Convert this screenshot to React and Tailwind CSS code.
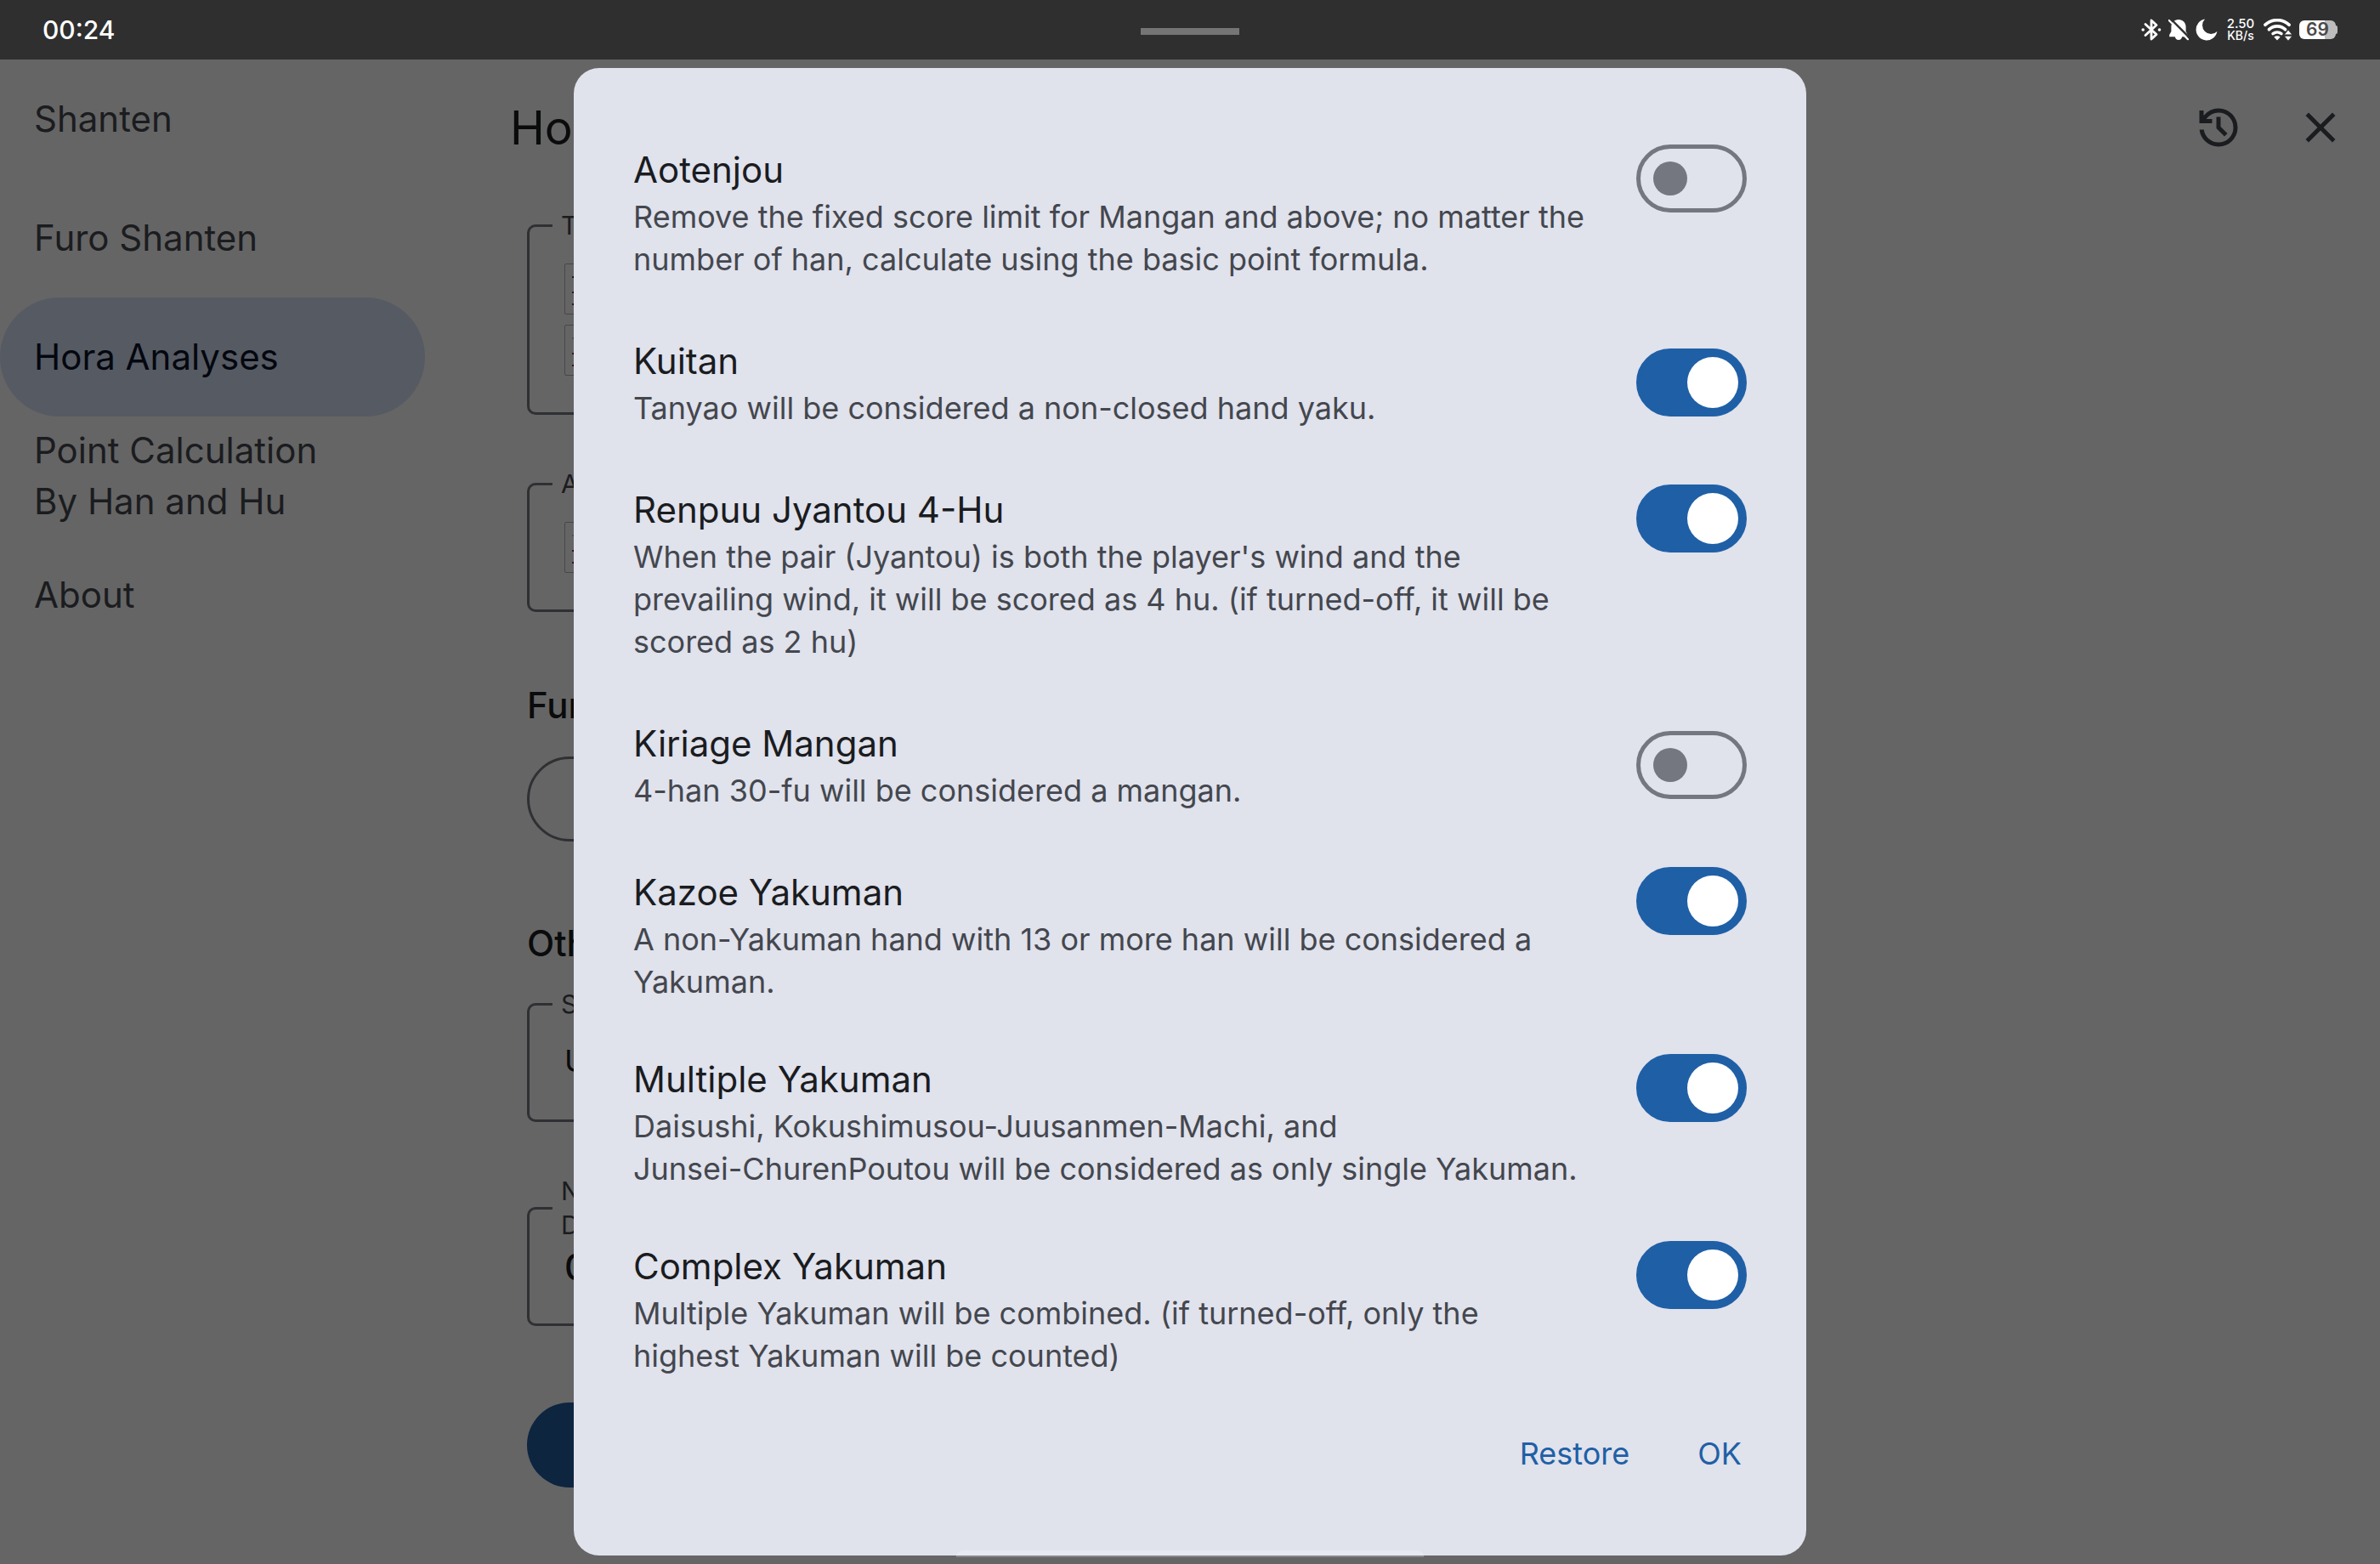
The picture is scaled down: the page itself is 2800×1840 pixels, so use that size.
import React, { useState } from "react";

const NAV = [
  { lines: ["Shanten"] },
  { lines: ["Furo Shanten"] },
  { lines: ["Hora Analyses"], active: true },
  { lines: ["Point Calculation", "By Han and Hu"] },
  { lines: ["About"] },
];

const OPTIONS = [
  {
    id: "aotenjou",
    title: "Aotenjou",
    lines: [
      "Remove the fixed score limit for Mangan and above; no matter the",
      "number of han, calculate using the basic point formula.",
    ],
    on: false,
  },
  {
    id: "kuitan",
    title: "Kuitan",
    lines: ["Tanyao will be considered a non-closed hand yaku."],
    on: true,
  },
  {
    id: "renpuu",
    title: "Renpuu Jyantou 4-Hu",
    lines: [
      "When the pair (Jyantou) is both the player's wind and the",
      "prevailing wind, it will be scored as 4 hu. (if turned-off, it will be",
      "scored as 2 hu)",
    ],
    on: true,
  },
  {
    id: "kiriage",
    title: "Kiriage Mangan",
    lines: ["4-han 30-fu will be considered a mangan."],
    on: false,
  },
  {
    id: "kazoe",
    title: "Kazoe Yakuman",
    lines: [
      "A non-Yakuman hand with 13 or more han will be considered a",
      "Yakuman.",
    ],
    on: true,
  },
  {
    id: "multiple",
    title: "Multiple Yakuman",
    lines: [
      "Daisushi, Kokushimusou-Juusanmen-Machi, and",
      "Junsei-ChurenPoutou will be considered as only single Yakuman.",
    ],
    on: true,
  },
  {
    id: "complex",
    title: "Complex Yakuman",
    lines: [
      "Multiple Yakuman will be combined. (if turned-off, only the",
      "highest Yakuman will be counted)",
    ],
    on: true,
  },
];

function BluetoothIcon() {
  return (
    <svg viewBox="0 0 24 26" className="h-[26px] w-6" fill="none" aria-hidden="true">
      <path d="M5 6.5 18 18.5 12 24V2l6 5.5L5 19.5" stroke="#fff" strokeWidth="2.8" strokeLinejoin="round" strokeLinecap="round" />
      <circle cx="2.2" cy="13" r="1.8" fill="#fff" />
      <circle cx="21.5" cy="13" r="1.8" fill="#fff" />
    </svg>
  );
}

function BellOffIcon() {
  return (
    <svg viewBox="0 0 24 26" className="h-[26px] w-6" aria-hidden="true">
      <path d="M12 1c-5 0-8.600 3.600-8.600 8.600v5.400L1.200 19v2.200h6.600c.4 2.200 2 3.800 4.200 3.800s3.800-1.600 4.200-3.800h6.600V19l-2.200-4V9.600C20.600 4.600 17 1 12 1z" fill="#fff" />
      <path d="M2.500 0 25 22.500" stroke="#2f2f2f" strokeWidth="2.400" />
      <path d="M.8 2 23 24.200" stroke="#fff" strokeWidth="2.200" strokeLinecap="round" />
    </svg>
  );
}

function MoonIcon() {
  return (
    <svg viewBox="0 0 26 26" className="size-[26px]" aria-hidden="true">
      <path d="M11 .6A12.500 12.500 0 1 0 25.400 15 9.800 9.800 0 0 1 11 .6z" fill="#fff" />
    </svg>
  );
}

function WifiIcon() {
  return (
    <svg viewBox="0 0 34 26" className="h-[26px] w-[34px]" fill="none" aria-hidden="true">
      <path d="M2 7.200C10-.2 22-.2 30 7.200" stroke="#fff" strokeWidth="3.800" strokeLinecap="round" />
      <path d="M6.500 12.700c5.500-5 13.500-5 19 0" stroke="#fff" strokeWidth="3.800" strokeLinecap="round" />
      <path d="M11 17.700c3-2.400 7-2.400 10 0" stroke="#fff" strokeWidth="3.400" strokeLinecap="round" />
      <path d="M12.300 21.500c2-1.600 5.400-1.600 7.400 0L16 25.600z" fill="#fff" />
      <path d="M24.400 18.800h9.200L29 13.200zM24.400 20.400h9.200L29 26z" fill="#fff" stroke="#2f2f2f" strokeWidth=".6" />
    </svg>
  );
}

function HistoryIcon() {
  return (
    <svg viewBox="0 0 24 24" className="size-[60px]" aria-hidden="true">
      <path
        d="M12 21q-3.450 0-6.012-2.287Q3.425 16.425 3.050 13H5.100q.35 2.600 2.313 4.300Q9.375 19 12 19q2.925 0 4.963-2.037Q19 14.925 19 12t-2.037-4.963Q14.925 5 12 5q-1.725 0-3.225.8T6.250 8H9v2H3V4h2v2.350q1.275-1.600 3.113-2.475Q9.950 3 12 3q1.875 0 3.513.712 1.637.713 2.850 1.926 1.212 1.212 1.925 2.850Q21 10.125 21 12t-.712 3.512q-.713 1.638-1.925 2.850-1.213 1.213-2.850 1.926Q13.875 21 12 21Zm2.800-4.800L11 12.400V7h2v4.600l3.200 3.200Z"
        fill="#1a1c1f"
      />
    </svg>
  );
}

function CloseIcon() {
  return (
    <svg viewBox="0 0 24 24" className="size-[60px]" aria-hidden="true">
      <path
        d="M19 6.410 17.590 5 12 10.590 6.410 5 5 6.410 10.590 12 5 17.590 6.410 19 12 13.410 17.590 19 19 17.590 13.410 12z"
        fill="#1a1c1f"
      />
    </svg>
  );
}

function StatusBar() {
  return (
    <header className="grid h-[70px] shrink-0 grid-cols-3 items-center bg-[#2f2f2f] px-[50px] text-white">
      <span className="text-[30px] leading-10 font-medium">00:24</span>
      <span className="mt-1 h-2 w-[116px] justify-self-center bg-[#757575]" />
      <div className="flex items-center gap-2 justify-self-end">
        <BluetoothIcon />
        <BellOffIcon />
        <MoonIcon />
        <div className="mx-1 flex w-[30px] flex-col items-center text-[15px] leading-[14px] font-medium">
          <span>2.50</span>
          <span className="text-[14px]">KB/s</span>
        </div>
        <WifiIcon />
        <div className="flex items-center">
          <span className="flex h-[22px] w-[43px] items-center justify-center rounded-md bg-linear-to-r from-white from-69% to-[#bdbdbd] to-69% text-[21px] leading-[22px] font-semibold text-[#4a4a4a]">
            69
          </span>
          <span className="h-2.5 w-0.5 rounded-r-sm bg-[#bdbdbd]" />
        </div>
      </div>
    </header>
  );
}

function Tile({ top = "bg-[#4c4c4c]" }) {
  return (
    <span className="flex h-[60px] w-[42px] flex-col rounded-xs border border-[#474747] px-2">
      <span className={"mt-3.5 h-0.5 w-6 rounded-full " + top} />
      <span className="mt-4 h-0.5 w-6 rounded-full bg-[#2a0508]" />
      <span className="mt-3 h-0.5 w-6 rounded-full bg-[#2a0508]" />
    </span>
  );
}

function Field({ label, className = "", children }) {
  return (
    <fieldset className={"rounded-[10px] border-3 border-[#2f3033] pr-10 pl-[27px] " + className}>
      <legend className="px-2.5 text-[30px] leading-10 text-[#1b1c1f]">{label}</legend>
      <div className="pl-3.5">{children}</div>
    </fieldset>
  );
}

function Switch({ id, checked, onChange }) {
  return (
    <span className="relative block h-20 w-[130px] shrink-0">
      <input
        id={id}
        type="checkbox"
        role="switch"
        checked={checked}
        onChange={onChange}
        className="peer block h-20 w-[130px] cursor-pointer appearance-none rounded-full border-5 border-[#74777f] checked:border-[#1f5fa6] checked:bg-[#1f5fa6]"
      />
      <span className="pointer-events-none absolute top-5 left-5 size-10 rounded-full bg-[#74777f] peer-checked:top-2.5 peer-checked:left-[60px] peer-checked:size-[60px] peer-checked:bg-white" />
    </span>
  );
}

function OptionRow({ option, checked, onChange }) {
  const single = option.lines.length === 1;
  return (
    <li className={single ? "flex min-h-[180px] items-center gap-10" : "flex items-start gap-10 py-[30px]"}>
      <label htmlFor={option.id} className="min-w-0 flex-1">
        <span className="block text-[42px] leading-[60px] text-[#1a1c1f]">{option.title}</span>
        {option.lines.map((line) => (
          <span key={line} className="block text-[36px] leading-[50px] whitespace-nowrap text-[#44474e]">
            {line}
          </span>
        ))}
      </label>
      <Switch id={option.id} checked={checked} onChange={onChange} />
    </li>
  );
}

export default function App() {
  const [state, setState] = useState(() => Object.fromEntries(OPTIONS.map((o) => [o.id, o.on])));
  const toggle = (id) => setState((s) => ({ ...s, [id]: !s[id] }));

  return (
    <div className="relative flex min-h-screen flex-col bg-[#656565] font-[Inter,sans-serif]">
      <StatusBar />
      <div className="flex flex-1">
        <nav className="w-[560px] shrink-0 pr-[60px]">
          {NAV.map((item) => (
            <a
              key={item.lines[0]}
              href="#"
              className={
                item.active
                  ? "flex h-[140px] flex-col justify-center rounded-full bg-[#565a63] px-10 text-[42px] leading-[60px] text-[#04070f]"
                  : "flex h-[140px] flex-col justify-center rounded-full px-10 text-[42px] leading-[60px] text-[#1b1c1f]"
              }
            >
              {item.lines.map((line) => (
                <span key={line}>{line}</span>
              ))}
            </a>
          ))}
        </nav>

        <main className="flex-1">
          <div className="flex h-[160px] items-center px-10">
            <h1 className="flex-1 text-[55px] leading-[70px] text-[#0a0b0c]">Hora</h1>
            <div className="flex gap-[60px]">
              <button type="button" aria-label="History">
                <HistoryIcon />
              </button>
              <button type="button" aria-label="Close">
                <CloseIcon />
              </button>
            </div>
          </div>

          <div className="w-1/2 pt-[15px] pl-[60px]">
            <Field label="Tiles" className="h-[243px]">
              <div className="flex flex-col gap-3 pt-[25px]">
                <Tile top="bg-[#0a0a0a]" />
                <Tile />
              </div>
            </Field>
            <Field label="Agari" className="mt-[61px] h-[171px]">
              <div className="pt-[25px]">
                <Tile />
              </div>
            </Field>

            <h2 className="mt-20 text-[42px] leading-[60px] font-medium text-[#0a0b0c]">Furo</h2>
            <button
              type="button"
              aria-label="Add furo"
              className="mt-[30px] block h-[100px] w-full rounded-full border-3 border-[#2f3033]"
            />

            <h2 className="mt-[90px] text-[42px] leading-[60px] font-medium text-[#0a0b0c]">Other</h2>
            <Field label="Seat" className="mt-[21px] h-[159px]">
              <span className="block pt-[22px] text-[36px] leading-[50px] text-[#0a0b0c]">U</span>
            </Field>
            <Field
              label={
                <>
                  Num
                  <br />
                  Dora
                </>
              }
              className="mt-[61px] h-[179px]"
            >
              <span className="block text-[42px] leading-[60px] font-medium text-[#0a0b0c]">0</span>
            </Field>
            <button type="button" aria-label="Calculate" className="mt-[90px] block h-[100px] w-full rounded-full bg-[#0d253f]" />
          </div>
        </main>
      </div>

      <div className="absolute inset-0 flex justify-center pt-20 pb-2.5">
        <section
          role="dialog"
          aria-label="Options"
          className="flex w-[1450px] flex-col rounded-[30px] bg-[#e0e2ec] px-[70px] pt-[60px]"
        >
          <ul>
            {OPTIONS.map((o) => (
              <OptionRow key={o.id} option={o} checked={state[o.id]} onChange={() => toggle(o.id)} />
            ))}
          </ul>
          <div className="-mr-6 flex justify-end gap-5 pt-2.5 text-[36px] leading-[50px] text-[#1f5fa6]">
            <button type="button" className="px-[30px] py-[25px]">
              Restore
            </button>
            <button type="button" className="px-[30px] py-[25px]">
              OK
            </button>
          </div>
        </section>
      </div>
      <span className="absolute bottom-2 left-1/2 h-2 w-[550px] -translate-x-1/2 rounded-t-full border-b-2 border-[#86878a] bg-[#e6e8f2]" />
    </div>
  );
}
